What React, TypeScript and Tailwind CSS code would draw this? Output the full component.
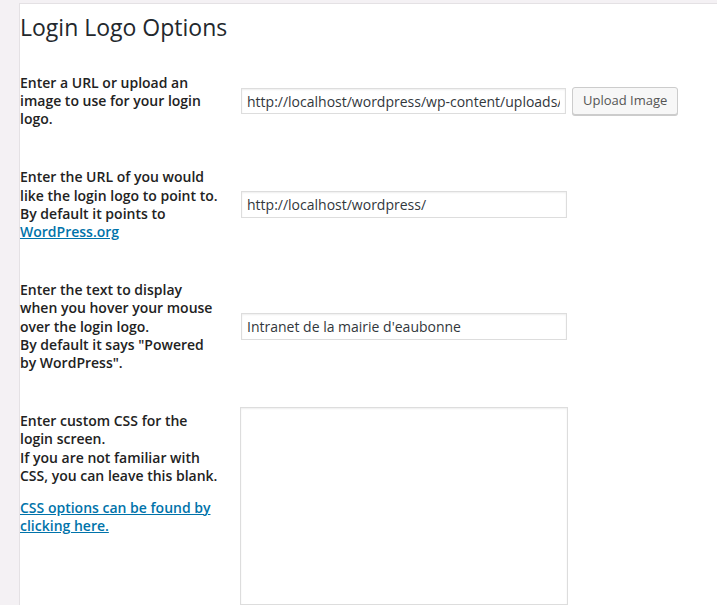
import React from "react";

const font = { fontFamily: '"Open Sans", "Noto Sans", sans-serif' };

function Label({ children }: { children: React.ReactNode }) {
  return (
    <div className="w-[200px] shrink-0 py-[20px] pr-[10px] box-content text-[14px] leading-[1.3] font-semibold text-[#222]">
      {children}
    </div>
  );
}

export default function App() {
  return (
    <div
      className="h-[605px] w-[717px] overflow-hidden bg-[#f4f1f4] flex"
      style={font}
    >
      <div className="ml-[19px] mt-[3px] flex-1 bg-white border-l border-t border-[#e4e1e4]">
        <h2 className="mt-[9px] text-[23px] leading-[1.3] font-normal text-[#23282d]">
          Login Logo Options
        </h2>
        <div className="mt-[11px] flex flex-col">
          <div className="flex items-center">
            <Label>
              Enter a URL or upload an image to use for your login logo.
            </Label>
            <div className="pl-[11px] flex items-center gap-[6px]">
              <input
                readOnly
                value="http://localhost/wordpress/wp-content/uploads/2014/04/logo.png"
                className="w-[325px] h-[26px] px-[5px] border border-[#ddd] shadow-[inset_0_1px_2px_rgba(0,0,0,0.07)] text-[14px] text-[#32373c] outline-none bg-white"
              />
              <button className="h-[28px] px-[10px] pb-[1px] rounded-[3px] border border-[#ccc] bg-[#f7f7f7] shadow-[0_1px_0_#ccc] text-[13px] text-[#555]">
                Upload Image
              </button>
            </div>
          </div>
          <div className="flex items-center">
            <Label>
              Enter the URL of you would like the login logo to point to.
              <br />
              By default it points to{" "}
              <a href="#" className="text-[#0073aa] underline">
                WordPress.org
              </a>
            </Label>
            <div className="pl-[11px]">
              <input
                readOnly
                value="http://localhost/wordpress/"
                className="w-[326px] h-[27px] px-[5px] border border-[#ddd] shadow-[inset_0_1px_2px_rgba(0,0,0,0.07)] text-[14px] text-[#32373c] outline-none bg-white"
              />
            </div>
          </div>
          <div className="flex items-center">
            <Label>
              Enter the text to display when you hover your mouse over the login
              logo.
              <br />
              By default it says "Powered by WordPress".
            </Label>
            <div className="pl-[11px]">
              <input
                readOnly
                value="Intranet de la mairie d'eaubonne"
                className="w-[326px] h-[27px] px-[5px] border border-[#ddd] shadow-[inset_0_1px_2px_rgba(0,0,0,0.07)] text-[14px] text-[#32373c] outline-none bg-white"
              />
            </div>
          </div>
          <div className="flex items-start">
            <Label>
              Enter custom CSS for the login screen.
              <br />
              If you are not familiar with CSS, you can leave this blank.
              <br />
              <span className="block mt-[14px]">
                <a href="#" className="text-[#0073aa] underline">
                  CSS options can be found by clicking here.
                </a>
              </span>
            </Label>
            <div className="pl-[10px] pt-[15px]">
              <textarea
                readOnly
                className="block w-[328px] h-[198px] border border-[#ddd] shadow-[inset_0_1px_2px_rgba(0,0,0,0.07)] resize-none outline-none bg-white"
              />
            </div>
          </div>
        </div>
      </div>
    </div>
  );
}
